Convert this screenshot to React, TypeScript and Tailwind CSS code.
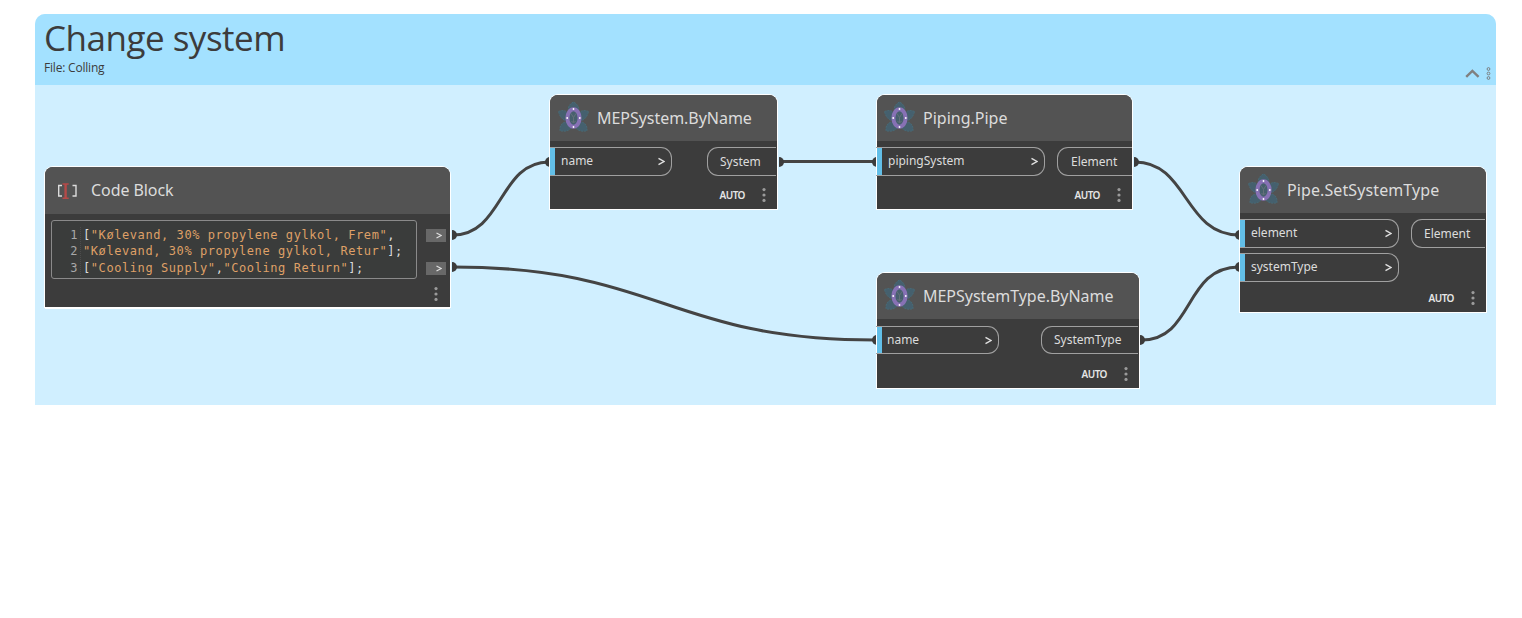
import React from "react";

type Node = {
  title: string;
  frame: string;
  header: string;
  tracking: string;
  inputs: { label: string; cls: string }[];
  output: string;
  outputCls: string;
  body: string;
};

const nodes: Node[] = [
  {
    title: "MEPSystem.ByName",
    frame: "left-[550px] top-[95px] w-[227px] h-[114px]",
    header: "h-[46px] pl-2",
    tracking: "tracking-[-0.04px]",
    inputs: [{ label: "name", cls: "w-[122px] h-[29px] pl-[6px] pb-[1px]" }],
    output: "System",
    outputCls: "w-[69px] h-[29px] pl-3 mr-px",
    body: "pt-[6px]",
  },
  {
    title: "Piping.Pipe",
    frame: "left-[877px] top-[95px] w-[255px] h-[114px]",
    header: "h-[46px] pl-[7px]",
    tracking: "tracking-normal",
    inputs: [{ label: "pipingSystem", cls: "-ml-px w-[169px] h-[29px] pl-[7px] pb-[1px]" }],
    output: "Element",
    outputCls: "w-[75px] h-[29px] pl-[13px]",
    body: "pt-[6px]",
  },
  {
    title: "MEPSystemType.ByName",
    frame: "left-[877px] top-[273px] w-[262px] h-[115px]",
    header: "h-[46px] pl-[7px]",
    tracking: "tracking-[-0.03px]",
    inputs: [{ label: "name", cls: "-ml-px w-[123px] h-[28px] pl-[6px]" }],
    output: "SystemType",
    outputCls: "w-[97px] h-[28px] pl-3 mr-px",
    body: "pt-[7px]",
  },
  {
    title: "Pipe.SetSystemType",
    frame: "left-[1240px] top-[167px] w-[246px] h-[145px]",
    header: "h-[46px] pl-[8px]",
    tracking: "tracking-[0.1px]",
    inputs: [
      { label: "element", cls: "w-[159px] h-[29px] pl-[6px] pb-[1px]" },
      { label: "systemType", cls: "w-[159px] h-[29px] pl-[6px] pb-[1px]" },
    ],
    output: "Element",
    outputCls: "w-[74px] h-[29px] pl-3 mr-px",
    body: "pt-[6px]",
  },
];

const petals = [
  "M10.5 10 C9.3 6 12 3 15.5 0.8 C19 3 21.7 6 20.5 10 L15.5 15Z",
  "M0.5 10.5 C4.5 8.6 8 9.2 10.5 12.5 L9 20 C4.5 19.3 1.5 15.5 0.5 10.5Z",
  "M30.5 10.5 C26.5 8.6 23 9.2 20.5 12.5 L22 20 C26.5 19.3 29.5 15.5 30.5 10.5Z",
  "M2 29.8 C1.5 25 3.5 21.5 8.5 20.7 L13.5 26.5 C11.5 29.8 7 31 2 29.8Z",
  "M29 29.8 C29.5 25 27.5 21.5 22.5 20.7 L17.5 26.5 C19.5 29.8 24 31 29 29.8Z",
];

const Flower = () => (
  <svg width="31" height="31" viewBox="0 0 31 31" className="mb-[4px] shrink-0">
    {petals.map((d) => (
      <path key={d} d={d} fill="#45606e" stroke="#47707d" strokeWidth="0.7" strokeDasharray="2 1" />
    ))}
    <ellipse cx="15.5" cy="17" rx="6.1" ry="8.8" fill="#46606d" stroke="#8771b4" strokeWidth="4" />
    <path d="M13 12.5l2.5 4 2.5-4M15.5 16.5v5M13.5 20l2 2 2-2" fill="none" stroke="#68727b" strokeWidth="0.9" />
    <g fill="#fff">
      <circle cx="15.5" cy="8" r="0.9" />
      <circle cx="15.5" cy="26" r="0.9" />
      <circle cx="9.2" cy="17" r="0.9" />
      <circle cx="21.8" cy="17" r="0.9" />
    </g>
  </svg>
);

const Dots = () => (
  <svg width="4" height="14" viewBox="0 0 4 14" fill="#9b9b9b">
    <circle cx="2" cy="1.6" r="1.6" />
    <circle cx="2" cy="7" r="1.6" />
    <circle cx="2" cy="12.4" r="1.6" />
  </svg>
);

const Chevron = () => (
  <svg width="7" height="9" viewBox="0 0 7 9" fill="none" stroke="#e0e0e0" strokeWidth="1.4">
    <path d="M0.5 1.3L6 4.5L0.5 7.7" />
  </svg>
);

function NodeCard({ n }: { n: Node }) {
  return (
    <section className={`absolute flex flex-col rounded-t-lg bg-[#3c3c3c] ring-1 ring-white ${n.frame}`}>
      <header className={`flex shrink-0 items-center gap-[8px] rounded-t-lg bg-[#535353] ${n.header}`}>
        <Flower />
        <h2 className={`whitespace-nowrap text-[16px] leading-5 text-[#dcdcdc] ${n.tracking}`}>{n.title}</h2>
      </header>
      <div className={`flex items-start justify-between ${n.body}`}>
        <div className="flex flex-col gap-[5px]">
          {n.inputs.map((p) => (
            <div key={p.label} className="flex">
              <div className="z-10 my-px -mr-[5px] w-[5px] bg-[#62bfe8]" />
              <div
                className={`flex items-center justify-between rounded-r-[11px] border border-l-0 border-[#a0a0a0] pr-[6px] text-[12px] leading-4 text-[#dcdcdc] ${p.cls}`}
              >
                <span className="pl-[5px]">{p.label}</span>
                <Chevron />
              </div>
            </div>
          ))}
        </div>
        <div
          className={`flex items-center rounded-l-[11px] border border-r-0 border-[#a0a0a0] text-[12px] leading-4 text-[#dcdcdc] ${n.outputCls}`}
        >
          {n.output}
        </div>
      </div>
      <footer className="mb-[7px] mr-[11px] mt-auto flex items-center justify-end gap-[17px] text-[10px] font-semibold leading-[14px] text-[#e6e6e6]">
        <span className="tracking-[-0.5px]">AUTO</span>
        <Dots />
      </footer>
    </section>
  );
}

const wires = [
  "M453 235 C503 235 499 162 549 162",
  "M453 267 C660 267 668 340 875 340",
  "M780 161.5 H877",
  "M1135 162 C1188 162 1184 235 1239 235",
  "M1142 340 C1194 340 1184 267 1239 267",
];

const ports = [
  [452, 235, 1], [452, 267, 1], [779, 162, 1], [1134, 162, 1], [1140, 340, 1],
  [550, 162, 0], [877, 162, 0], [877, 340, 0], [1240, 235, 0], [1240, 267, 0],
];

const S = ({ children }: { children: React.ReactNode }) => <span className="text-[#dfa067]">{children}</span>;

const OutBtn = () => (
  <div className="flex h-[13px] w-5 items-center justify-center bg-[#686868] pl-[5px]">
    <svg width="6" height="7" viewBox="0 0 6 7" fill="none" stroke="#dedede" strokeWidth="1.2">
      <path d="M0.5 1L5.2 3.5L0.5 6" />
    </svg>
  </div>
);

export default function App() {
  return (
    <main className="relative h-[618px] w-[1522px] overflow-hidden bg-white font-['Noto_Sans',sans-serif]">
      <div className="pl-[35px] pt-[14px]">
        <div className="h-[391px] w-[1461px] overflow-hidden rounded-t-[10px] bg-[#d0efff]">
          <div className="flex h-[71px] justify-between bg-[#a3e1ff] pl-[9px] text-[#3c3c3c]">
            <div>
              <h1 className="mb-[2px] mt-[4px] h-[40px] whitespace-nowrap font-['Open_Sans',sans-serif] text-[35px] leading-[40px] tracking-[-0.5px]">
                Change system
              </h1>
              <p className="font-['Open_Sans',sans-serif] text-[12px] leading-4 tracking-[-0.2px]">File: Colling</p>
            </div>
            <div className="flex items-end gap-[6px] pb-[4px] pr-[5px]">
              <svg width="15" height="9" viewBox="0 0 15 9" fill="none" stroke="#808080" strokeWidth="2.4" className="mb-[3px]">
                <path d="M1.2 7.8L7.4 1.8L13.6 7.8" />
              </svg>
              <svg width="5" height="13" viewBox="0 0 5 13" fill="none" stroke="#777" strokeWidth="0.9" className="mb-px">
                <circle cx="2.5" cy="2" r="1.4" />
                <circle cx="2.5" cy="6.5" r="1.4" />
                <circle cx="2.5" cy="11" r="1.4" />
              </svg>
            </div>
          </div>
        </div>
      </div>

      <svg className="absolute left-0 top-0" width="1522" height="618" fill="none">
        {wires.map((d) => (
          <path key={d} d={d} stroke="#444" strokeWidth="3" />
        ))}
        {ports.map(([x, y, right]) => (
          <path key={`${x}-${y}`} d={`M${x} ${y - 5} a5 5 0 0 ${right} 0 10Z`} fill="#3c3c3c" />
        ))}
      </svg>

      <section className="absolute left-[45px] top-[167px] flex h-[140px] w-[405px] flex-col rounded-t-lg bg-[#3c3c3c] shadow-[0_2px_0_0_#fff] ring-1 ring-white">
        <header className="flex h-[47px] shrink-0 items-center gap-[14px] rounded-t-lg bg-[#535353] pb-px pl-3">
          <svg width="20" height="18" viewBox="0 0 20 18" fill="none" className="mt-px">
            <path d="M5 3.5H1.7V14H5M15.5 3.5H19V14H15.5" stroke="#dcdcdc" strokeWidth="1.4" />
            <path d="M5.5 2H11.7M5.5 16.2H11.7" stroke="#b54a48" strokeWidth="1.6" />
            <path d="M8.6 2V16" stroke="#b54a48" strokeWidth="2.4" />
          </svg>
          <h2 className="text-[16px] leading-5 tracking-[-0.08px] text-[#dcdcdc]">Code Block</h2>
        </header>
        <div className="flex pl-[6px] pt-[6px]">
          <div className="flex h-[59px] w-[366px] rounded-[3px] border border-[#8a8a8a] bg-[#3a3c3b] pt-[6px] font-['DejaVu_Sans_Mono',monospace] text-[12px] leading-[16.4px] tracking-[0.576px]">
            <div className="w-[26px] text-right text-[#a8a8a8]">
              <div>1</div>
              <div>2</div>
              <div>3</div>
            </div>
            <div className="ml-[2px] h-[49px] border-l border-dotted border-[#4c4c4c]" />
            <pre className="ml-[2px] font-['DejaVu_Sans_Mono',monospace] text-[#dcdcdc]">
              [<S>"Kølevand, 30% propylene gylkol, Frem"</S>,{"\n"}
              <S>"Kølevand, 30% propylene gylkol, Retur"</S>];{"\n"}
              [<S>"Cooling Supply"</S>,<S>"Cooling Return"</S>];
            </pre>
          </div>
          <div className="ml-[9px] mt-[9px] flex flex-col gap-5">
            <OutBtn />
            <OutBtn />
          </div>
        </div>
        <div className="mb-[6px] mr-[12px] mt-auto flex justify-end">
          <Dots />
        </div>
      </section>

      {nodes.map((n) => (
        <NodeCard key={n.title} n={n} />
      ))}
    </main>
  );
}
